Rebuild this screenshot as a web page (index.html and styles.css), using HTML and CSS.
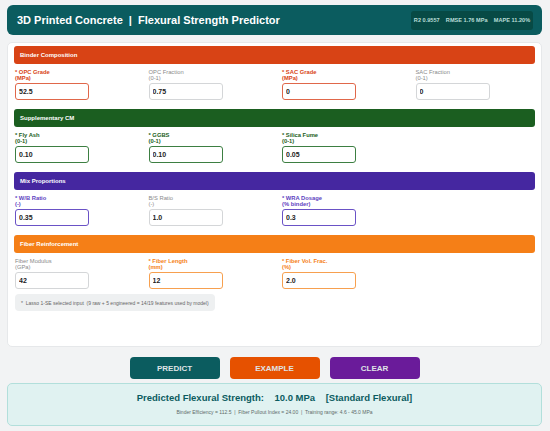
FILE: index.html
```html
<!DOCTYPE html>
<html>
<head>
<meta charset="utf-8">
<link rel="stylesheet" href="styles.css">
</head>
<body>
<div class="page">
  <header class="header">
    <h1 class="title">3D Printed Concrete &nbsp;|&nbsp; Flexural Strength Predictor</h1>
    <div class="metrics">R2 0.9557 &nbsp;&nbsp; RMSE 1.76 MPa &nbsp;&nbsp; MAPE 11.20%</div>
  </header>

  <main class="card">
    <section class="sec sec-binder">
      <div class="bar">Binder Composition</div>
      <div class="grid">
        <div class="field req"><label>* OPC Grade<br>(MPa)</label><input value="52.5"></div>
        <div class="field"><label>OPC Fraction<br>(0-1)</label><input value="0.75"></div>
        <div class="field req"><label>* SAC Grade<br>(MPa)</label><input value="0"></div>
        <div class="field"><label>SAC Fraction<br>(0-1)</label><input value="0"></div>
      </div>
    </section>

    <section class="sec sec-scm">
      <div class="bar">Supplementary CM</div>
      <div class="grid">
        <div class="field req"><label>* Fly Ash<br>(0-1)</label><input value="0.10"></div>
        <div class="field req"><label>* GGBS<br>(0-1)</label><input value="0.10"></div>
        <div class="field req"><label>* Silica Fume<br>(0-1)</label><input value="0.05"></div>
      </div>
    </section>

    <section class="sec sec-mix">
      <div class="bar">Mix Proportions</div>
      <div class="grid">
        <div class="field req"><label>* W/B Ratio<br>(-)</label><input value="0.35"></div>
        <div class="field"><label>B/S Ratio<br>(-)</label><input value="1.0"></div>
        <div class="field req"><label>* WRA Dosage<br>(% binder)</label><input value="0.3"></div>
      </div>
    </section>

    <section class="sec sec-fiber">
      <div class="bar">Fiber Reinforcement</div>
      <div class="grid">
        <div class="field"><label>Fiber Modulus<br>(GPa)</label><input value="42"></div>
        <div class="field req"><label>* Fiber Length<br>(mm)</label><input value="12"></div>
        <div class="field req"><label>* Fiber Vol. Frac.<br>(%)</label><input value="2.0"></div>
      </div>
    </section>

    <div class="note">*&nbsp; Lasso 1-SE selected input&nbsp;&nbsp;(9 raw + 5 engineered = 14/19 features used by model)</div>
  </main>

  <div class="actions">
    <button class="btn btn-predict">PREDICT</button>
    <button class="btn btn-example">EXAMPLE</button>
    <button class="btn btn-clear">CLEAR</button>
  </div>

  <div class="result">
    <div class="result-title">Predicted Flexural Strength:&nbsp;&nbsp;&nbsp; 10.0 MPa &nbsp;&nbsp;&nbsp;[Standard Flexural]</div>
    <div class="result-sub">Binder Efficiency = 112.5 &nbsp;|&nbsp; Fiber Pullout Index = 24.00 &nbsp;|&nbsp; Training range: 4.6 - 45.0 MPa</div>
  </div>
</div>
</body>
</html>
```

FILE: styles.css
```css
* { box-sizing: border-box; }
html, body { margin: 0; padding: 0; }
body {
  background: #f2f3f4;
  font-family: "Liberation Sans", Arial, sans-serif;
  width: 550px;
  height: 431px;
  overflow: hidden;
}
.page {
  padding: 5px 8px 0 7px;
  display: flex;
  flex-direction: column;
}
.header {
  height: 30px;
  background: #0b5c5f;
  border-radius: 6px;
  display: flex;
  align-items: center;
  justify-content: space-between;
  padding: 0 9px 0 10px;
}
.title {
  margin: 0;
  color: #ffffff;
  font-size: 11px;
  font-weight: bold;
}
.metrics {
  background: #074a45;
  color: #b7ddd6;
  font-size: 5.6px;
  font-weight: bold;
  height: 19px;
  width: 122px;
  display: flex;
  align-items: center;
  justify-content: center;
  border-radius: 3px;
}
.card {
  margin-top: 7px;
  background: #ffffff;
  border: 1px solid #e6e8ea;
  border-radius: 5px;
  height: 305px;
  padding: 3px 6px 0 6px;
  display: flex;
  flex-direction: column;
}
.sec { margin-bottom: 9px; }
.bar {
  height: 18px;
  border-radius: 3px;
  color: #ffffff;
  font-size: 6px;
  font-weight: bold;
  display: flex;
  align-items: center;
  padding-left: 6px;
}
.grid {
  display: grid;
  grid-template-columns: repeat(4, 120.5px);
  column-gap: 13px;
  padding-left: 1px;
  margin-top: 5px;
}
.field label {
  display: block;
  font-size: 5.8px;
  line-height: 6.2px;
  color: #8a8a8a;
  height: 14px;
}
.field.req label { font-weight: bold; }
.field input {
  display: block;
  width: 74px;
  height: 17px;
  border: 1px solid #d4d6d8;
  border-radius: 3px;
  font-family: "Liberation Sans", Arial, sans-serif;
  font-size: 7px;
  font-weight: bold;
  color: #222;
  padding: 0 0 0 3px;
  outline: none;
  background: #fff;
}
.field.req input { border-width: 1.5px; }
.sec-binder .bar { background: #d84315; }
.sec-binder .req label { color: #d84315; }
.sec-binder .req input { border-color: #e0674a; }
.sec-scm .bar { background: #1b5e20; }
.sec-scm .req label { color: #1b5e20; }
.sec-scm .req input { border-color: #3d7f42; }
.sec-mix .bar { background: #4527a0; }
.sec-mix .req label { color: #5e3fbf; }
.sec-mix .req input { border-color: #6a52c6; }
.sec-fiber .bar { background: #f57f17; }
.sec-fiber .req label { color: #f57f17; }
.sec-fiber .req input { border-color: #f7a04f; }
.sec-fiber { margin-bottom: 5px; }
.note {
  width: 200px;
  height: 17px;
  background: #eef0f1;
  border-radius: 4px;
  color: #666;
  font-size: 5px;
  display: flex;
  align-items: center;
  padding-left: 6px;
  margin-left: 1px;
}
.actions {
  margin-top: 10px;
  display: flex;
  justify-content: center;
  gap: 10px;
}
.btn {
  width: 90px;
  height: 22px;
  border: none;
  border-radius: 4px;
  color: #dfe3e6;
  font-family: "Liberation Sans", Arial, sans-serif;
  font-size: 8px;
  font-weight: bold;
}
.btn-predict { background: #0b5c5f; }
.btn-example { background: #e65100; }
.btn-clear { background: #6a1b9a; }
.result {
  margin-top: 4px;
  height: 43px;
  background: #e0f2f1;
  border: 1px solid #b2dfdb;
  border-radius: 5px;
  display: flex;
  flex-direction: column;
  align-items: center;
  padding-top: 8px;
}
.result-title {
  color: #0b5c5f;
  font-size: 9.5px;
  font-weight: bold;
}
.result-sub {
  margin-top: 6px;
  color: #5f6b6b;
  font-size: 5px;
}
```
